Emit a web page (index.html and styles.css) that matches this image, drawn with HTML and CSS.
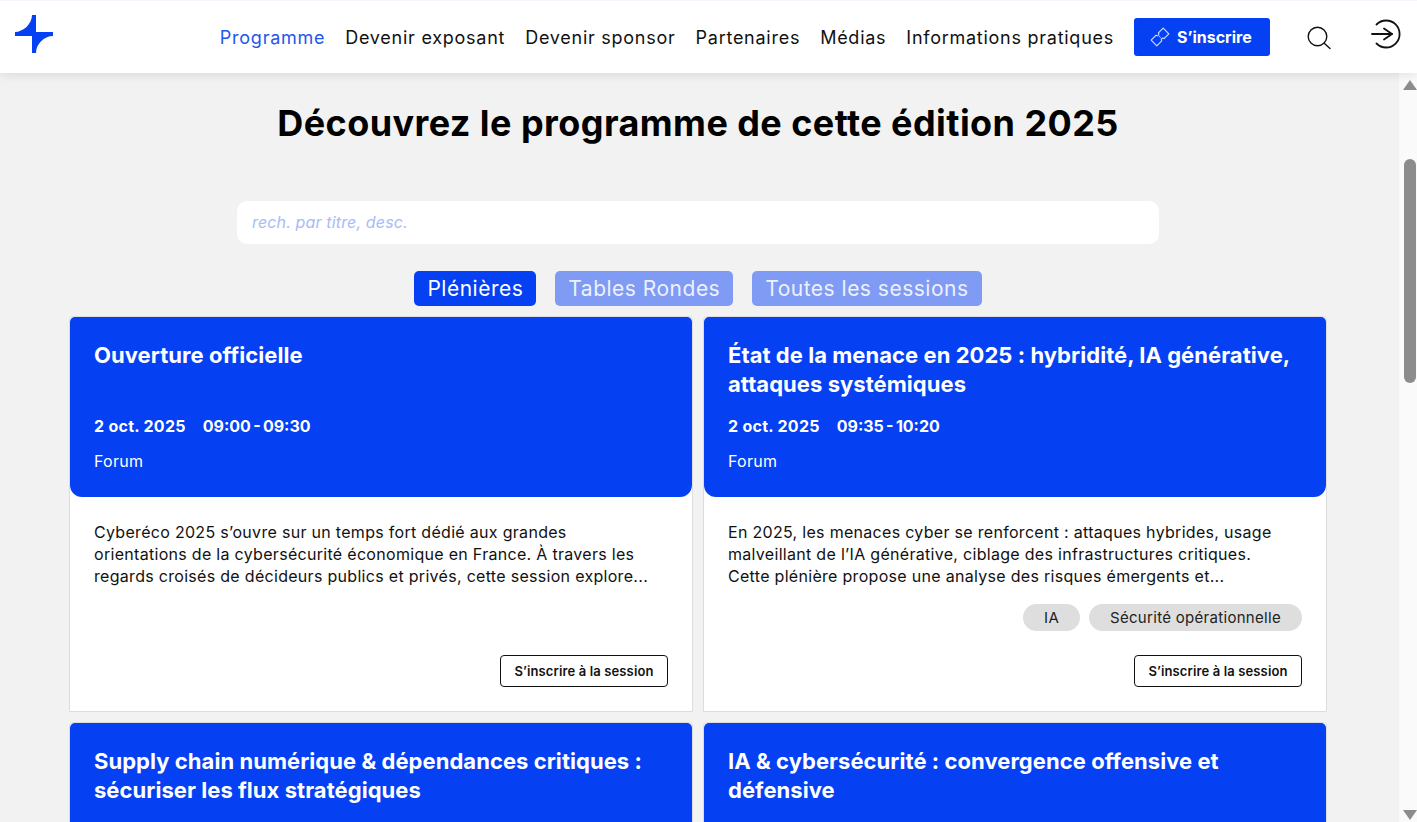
FILE: index.html
```html
<!DOCTYPE html>
<html lang="fr">
<head>
    <meta charset="UTF-8">
    <meta name="viewport" content="width=device-width, initial-scale=1.0">
    <title>Programme - Cyberéco 2025</title>
    <link rel="stylesheet" href="styles.css">
</head>
<body>
    <header class="site-header">
        <a class="logo" href="#">
            <svg width="40" height="40" viewBox="0 0 40 40">
                <path d="M1 18C9 18 18 10 18 1H22V18H39V22C30 22 22 30 22 39H18V22H1Z" fill="#0540f2"/>
            </svg>
        </a>
        <nav class="main-nav">
            <a class="active" href="#">Programme</a>
            <a href="#">Devenir exposant</a>
            <a href="#">Devenir sponsor</a>
            <a href="#">Partenaires</a>
            <a href="#">Médias</a>
            <a href="#">Informations pratiques</a>
        </nav>
        <a class="signup-btn" href="#">
            <svg width="20" height="20" viewBox="-10 -10 20 20" fill="none" stroke="#d5dfff" stroke-width="1.1" stroke-linejoin="round">
                <g transform="rotate(-45)">
                    <path d="M-8.5 -4H-1.5A1.6 1.6 0 0 0 1.7 -4H8.5V4H1.7A1.6 1.6 0 0 0 -1.5 4H-8.5Z"/>
                    <path d="M0.1 -1.2V1.2" stroke-dasharray="1 0.8"/>
                </g>
            </svg>
            S’inscrire
        </a>
        <a class="icon-link search-link" href="#">
            <svg width="26" height="26" viewBox="0 0 26 26" fill="none" stroke="#111" stroke-width="1.4">
                <circle cx="10.5" cy="11.5" r="9.3"/>
                <path d="M17.5 18.5L23 23.5" stroke-linecap="round"/>
            </svg>
        </a>
        <a class="icon-link login-link" href="#">
            <svg width="32" height="32" viewBox="0 0 32 32" fill="none" stroke="#111" stroke-width="1.8" stroke-linecap="round" stroke-linejoin="round">
                <path d="M6.5 6.5A13.5 13.5 0 1 1 6.5 25.5"/>
                <path d="M2 16H22"/>
                <path d="M14 10.5L22 16L14 21.5"/>
            </svg>
        </a>
    </header>

    <div class="page">
        <main class="content">
            <h1>Découvrez le programme de cette édition 2025</h1>

            <input class="search-input" type="text" placeholder="rech. par titre, desc.">

            <div class="tabs">
                <button class="tab active">Plénières</button>
                <button class="tab">Tables Rondes</button>
                <button class="tab">Toutes les sessions</button>
            </div>

            <section class="sessions">
                <article class="card">
                    <div class="card-head">
                        <h2>Ouverture officielle</h2>
                        <p class="card-time"><span>2 oct. 2025</span><span>09:00 - 09:30</span></p>
                        <p class="card-place">Forum</p>
                    </div>
                    <div class="card-body">
                        <p class="card-desc">Cyberéco 2025 s’ouvre sur un temps fort dédié aux grandes orientations de la cybersécurité économique en France. À travers les regards croisés de décideurs publics et privés, cette session explore...</p>
                        <div class="card-foot">
                            <a class="session-btn" href="#">S’inscrire à la session</a>
                        </div>
                    </div>
                </article>

                <article class="card">
                    <div class="card-head">
                        <h2>État de la menace en 2025 : hybridité, IA générative, attaques systémiques</h2>
                        <p class="card-time"><span>2 oct. 2025</span><span>09:35 - 10:20</span></p>
                        <p class="card-place">Forum</p>
                    </div>
                    <div class="card-body">
                        <p class="card-desc">En 2025, les menaces cyber se renforcent : attaques hybrides, usage malveillant de l’IA générative, ciblage des infrastructures critiques. Cette plénière propose une analyse des risques émergents et...</p>
                        <div class="tags">
                            <span class="tag">IA</span>
                            <span class="tag">Sécurité opérationnelle</span>
                        </div>
                        <div class="card-foot">
                            <a class="session-btn" href="#">S’inscrire à la session</a>
                        </div>
                    </div>
                </article>

                <article class="card">
                    <div class="card-head">
                        <h2>Supply chain numérique &amp; dépendances critiques : sécuriser les flux stratégiques</h2>
                    </div>
                </article>

                <article class="card">
                    <div class="card-head">
                        <h2>IA &amp; cybersécurité : convergence offensive et défensive</h2>
                    </div>
                </article>
            </section>
        </main>

        <div class="scrollbar">
            <span class="arrow-up"></span>
            <span class="thumb"></span>
            <span class="arrow-down"></span>
        </div>
    </div>
</body>
</html>
```

FILE: styles.css
```css
* {
    box-sizing: border-box;
}
html, body {
    height: 100%;
}
body {
    font-family: Inter, "Liberation Sans", sans-serif;
    background-color: #f2f2f2;
    color: #111;
    margin: 0;
    overflow: hidden;
    display: flex;
    flex-direction: column;
}
a {
    color: inherit;
    text-decoration: none;
}

/* header */
.site-header {
    position: relative;
    z-index: 2;
    flex: none;
    height: 73px;
    display: flex;
    align-items: center;
    background: white;
    border-top: 1px solid #f6f7fe;
    box-shadow: 0 2px 10px rgba(0, 0, 0, 0.1);
    padding: 0 15px 0 14px;
}
.logo {
    display: flex;
    margin-top: -7px;
}
.main-nav {
    display: flex;
    gap: 20px;
    margin-left: auto;
    font-size: 18px;
    letter-spacing: 0.74px;
}
.main-nav .active {
    color: #2456ee;
}
.signup-btn {
    display: flex;
    align-items: center;
    gap: 7px;
    width: 136px;
    height: 38px;
    margin-left: 20px;
    padding-left: 16px;
    background-color: #0540f2;
    color: white;
    font-size: 16px;
    font-weight: 700;
    border-radius: 3px;
}
.icon-link {
    display: flex;
}
.search-link {
    margin-left: 37px;
    margin-top: 2px;
}
.login-link {
    margin-left: 37px;
    margin-top: -7px;
}

/* page */
.page {
    flex: 1;
    min-height: 0;
    display: flex;
}
.content {
    flex: 1;
    min-width: 0;
    overflow: hidden;
    padding: 0 72px 0 69px;
    display: flex;
    flex-direction: column;
    align-items: center;
}
.content > * {
    flex: none;
}
h1 {
    margin: 27px 0 0;
    font-size: 36px;
    line-height: 46px;
    font-weight: 700;
    letter-spacing: 0.43px;
    color: #000;
    text-align: center;
}
.search-input {
    width: 922px;
    height: 43px;
    margin-top: 55px;
    padding: 0 15px 2px;
    background: white;
    border: none;
    border-radius: 10px;
    font-family: inherit;
    font-size: 16px;
    letter-spacing: 0.15px;
    font-style: italic;
}
.search-input::placeholder {
    color: #a8bbf8;
}
.tabs {
    display: flex;
    gap: 19px;
    margin-top: 27px;
}
.tab {
    height: 35px;
    padding: 0 13px;
    background-color: #7f9bf3;
    color: #eef1fd;
    border: none;
    border-radius: 5px;
    font-family: inherit;
    font-size: 21px;
    letter-spacing: 0.5px;
}
.tab.active {
    background-color: #0540f2;
    color: white;
}

/* session cards */
.sessions {
    width: 100%;
    display: grid;
    grid-template-columns: 1fr 1fr;
    gap: 10px;
    margin-top: 10px;
}
.card {
    display: flex;
    flex-direction: column;
    height: 396px;
    background: white;
    border: 1px solid #ddd;
    border-radius: 4px 4px 0 0;
}
.card-head {
    flex: none;
    height: 180px;
    padding: 24px 24px 0;
    background-color: #0540f2;
    color: white;
    border-radius: 5px 5px 12px 12px;
    display: flex;
    flex-direction: column;
}
h2 {
    margin: 0;
    height: 58px;
    font-size: 22px;
    line-height: 29px;
    font-weight: 700;
    letter-spacing: 0.05px;
}
.card-time {
    margin: 16px 0 0;
    display: flex;
    gap: 17px;
    font-size: 16px;
    line-height: 22px;
    font-weight: 700;
}
.card-time span:first-child {
    letter-spacing: 0.27px;
}
.card-time span:last-child {
    word-spacing: -1.5px;
}
.card-place {
    margin: 13px 0 0;
    font-size: 16px;
    line-height: 22px;
    letter-spacing: 0.3px;
}
.card-body {
    flex: 1;
    display: flex;
    flex-direction: column;
    padding: 24px;
}
.card-desc {
    margin: 0;
    padding-right: 12px;
    font-size: 16px;
    line-height: 22px;
    letter-spacing: 0.3px;
    color: #111;
}
.tags {
    display: flex;
    justify-content: flex-end;
    gap: 9px;
    margin-top: 17px;
}
.tag {
    height: 27px;
    line-height: 27px;
    padding: 0 21px;
    background-color: #dedede;
    border-radius: 14px;
    font-size: 15px;
    letter-spacing: 0.3px;
    color: #222;
}
.card-foot {
    margin-top: auto;
    display: flex;
    justify-content: flex-end;
}
.session-btn {
    width: 168px;
    height: 32px;
    line-height: 30px;
    text-align: center;
    background: white;
    color: #111;
    border: 1px solid #111;
    border-radius: 4px;
    font-size: 13px;
    font-weight: 600;
    letter-spacing: 0.13px;
}

/* scrollbar drawn like the one in the browser */
.scrollbar {
    flex: none;
    width: 18px;
    background-color: #fafafa;
    display: flex;
    flex-direction: column;
    align-items: flex-end;
}
.arrow-up, .arrow-down {
    width: 0;
    height: 0;
    border-left: 7px solid transparent;
    border-right: 7px solid transparent;
}
.arrow-up {
    margin-top: 7px;
    border-bottom: 10px solid #8c8c8c;
}
.arrow-down {
    margin-top: auto;
    margin-bottom: 2px;
    border-top: 10px solid #8c8c8c;
}
.thumb {
    width: 12px;
    height: 224px;
    margin-top: 69px;
    margin-right: 1px;
    background-color: #8c8c8c;
    border-radius: 6px;
}
```
